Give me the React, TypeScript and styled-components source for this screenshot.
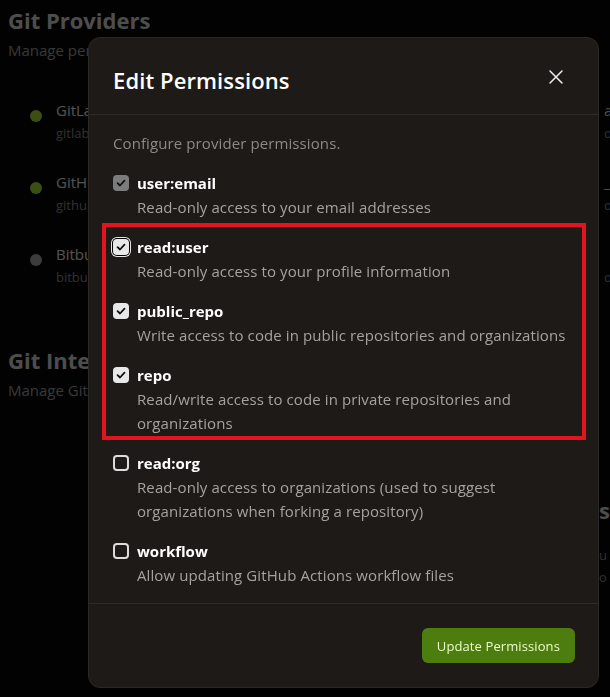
import React from "react";
import styled, { createGlobalStyle } from "styled-components";

const Global = createGlobalStyle`
  html, body { margin: 0; padding: 0; background: #080808; overflow: hidden; }
  body { font-family: "Open Sans", "Noto Sans", sans-serif; width: 610px; height: 697px; }
  * { box-sizing: border-box; }
`;

const Page = styled.div`
  position: relative;
  width: 610px;
  height: 697px;
  padding: 6px 8px;
  color: #e5e5e5;
  overflow: hidden;
`;

const Section = styled.section<{ $gap?: number }>`
  display: flex;
  flex-direction: column;
  margin-bottom: ${(p) => p.$gap ?? 0}px;
`;

const H2 = styled.h2`
  margin: 0;
  font-size: 22px;
  font-weight: 700;
  line-height: 28px;
  color: #dcdcdc;
  white-space: nowrap;
`;

const Sub = styled.p`
  margin: 4px 0 0;
  font-size: 15px;
  line-height: 24px;
  color: #a0a0a0;
  white-space: nowrap;
`;

const ProviderList = styled.div`
  display: flex;
  flex-direction: column;
  gap: 26px;
  padding: 36px 0 0 22px;
`;

const ProviderRow = styled.div`
  display: flex;
  align-items: flex-start;
  width: 640px;
`;

const Dot = styled.span<{ $on: boolean }>`
  width: 12px;
  height: 12px;
  border-radius: 50%;
  margin: 12px 14px 0 0;
  background: ${(p) => (p.$on ? "#a3e635" : "#ababab")};
  flex: none;
`;

const ProviderText = styled.div`
  display: flex;
  flex-direction: column;
  flex: 1;
`;

const ProviderName = styled.span`
  font-size: 15px;
  line-height: 24px;
  color: #e8e8e8;
`;

const ProviderUrl = styled.span`
  font-size: 13px;
  line-height: 22px;
  color: #8a8a8a;
`;

const ProviderSide = styled.div`
  display: flex;
  flex-direction: column;
  width: 66px;
  font-size: 15px;
  line-height: 24px;
  color: #d8d8d8;
  white-space: nowrap;
`;

const SideSmall = styled.span`
  font-size: 13px;
  line-height: 22px;
  color: #8a8a8a;
`;

const RightSection = styled.div`
  display: flex;
  flex-direction: column;
  padding-left: 591px;
  margin-top: 94px;
`;

const RightHead = styled.span`
  font-size: 22px;
  font-weight: 700;
  line-height: 28px;
  color: #dcdcdc;
  margin-bottom: 20px;
`;

const Overlay = styled.div`
  position: fixed;
  inset: 0;
  background: rgba(0, 0, 0, 0.65);
`;

const Dialog = styled.div`
  position: fixed;
  left: 88px;
  top: 37px;
  width: 511px;
  height: 651px;
  display: flex;
  flex-direction: column;
  background: #1e1a17;
  border: 1px solid #2b2724;
  border-radius: 12px;
  color: #f5f5f5;
`;

const Header = styled.header`
  display: flex;
  align-items: center;
  justify-content: space-between;
  padding: 24px 24px 16px 24px;
  height: 77px;
  border-bottom: 1px solid #302b28;
`;

const Title = styled.h2`
  margin: 0;
  font-size: 22px;
  font-weight: 600;
  line-height: 32px;
  letter-spacing: 0.1px;
  color: #ffffff;
`;

const Close = styled.button`
  display: flex;
  align-items: center;
  justify-content: center;
  width: 24px;
  height: 24px;
  padding: 0;
  margin: -6px 6px 0 0;
  border: none;
  background: transparent;
  color: #f0f0f0;
  cursor: pointer;
`;

const Body = styled.div`
  display: flex;
  flex-direction: column;
  gap: 16px;
  padding: 16px 24px 16px 24px;
  flex: 1;
  border-bottom: 1px solid #302b28;
`;

const Intro = styled.p`
  margin: 0;
  font-size: 15px;
  line-height: 24px;
  letter-spacing: 0.1px;
  color: #8c8a88;
`;

const Group = styled.div<{ $highlight?: boolean }>`
  display: flex;
  flex-direction: column;
  gap: 16px;
  ${(p) =>
    p.$highlight
      ? `
    margin: -12px -12px -5px -11px;
    padding: 8px 8px 1px 7px;
    border: 4px solid #e3141f;
  `
      : ""}
`;

const Item = styled.div`
  display: grid;
  grid-template-columns: 16px 1fr;
  column-gap: 8px;
`;

const Box = styled.span<{ $state: "checked" | "disabled" | "empty"; $focus?: boolean }>`
  width: 16px;
  height: 16px;
  margin-top: 4px;
  border-radius: 4px;
  display: flex;
  align-items: center;
  justify-content: center;
  color: #111;
  background: ${(p) =>
    p.$state === "checked" ? "#e8e8e8" : p.$state === "disabled" ? "#7c7c7c" : "transparent"};
  border: ${(p) => (p.$state === "empty" ? "2px solid #dcdcdc" : "none")};
  box-shadow: ${(p) => (p.$focus ? "0 0 0 1px #000, 0 0 0 2px #e8e8e8" : "none")};
`;

const Label = styled.span`
  font-size: 15px;
  font-weight: 700;
  line-height: 24px;
  color: #ffffff;
`;

const Desc = styled.span`
  grid-column: 2;
  font-size: 15px;
  line-height: 24px;
  letter-spacing: 0.1px;
  color: #a5a29f;
`;

const Footer = styled.footer`
  display: flex;
  justify-content: flex-end;
  padding: 24px 23px 24px 24px;
`;

const Primary = styled.button`
  height: 35px;
  padding: 0 15px;
  border: none;
  border-radius: 6px;
  background: #4d7c0f;
  color: #ecfccb;
  font-family: inherit;
  font-size: 13px;
  letter-spacing: 0.1px;
  cursor: pointer;
`;

const Check = () => (
  <svg width="10" height="10" viewBox="0 0 10 10" fill="none">
    <path d="M1.6 5.2 L4 7.5 L8.5 2.6" stroke="#111" strokeWidth="1.8" strokeLinecap="round" strokeLinejoin="round" />
  </svg>
);

type Perm = { name: string; desc: string; state: "checked" | "disabled" | "empty"; focus?: boolean };

const PermItem = ({ p }: { p: Perm }) => (
  <Item>
    <Box $state={p.state} $focus={p.focus}>{p.state !== "empty" && <Check />}</Box>
    <Label>{p.name}</Label>
    <Desc>{p.desc}</Desc>
  </Item>
);

const first: Perm = { name: "user:email", desc: "Read-only access to your email addresses", state: "disabled" };
const highlighted: Perm[] = [
  { name: "read:user", desc: "Read-only access to your profile information", state: "checked", focus: true },
  { name: "public_repo", desc: "Write access to code in public repositories and organizations", state: "checked" },
  { name: "repo", desc: "Read/write access to code in private repositories and organizations", state: "checked" },
];
const rest: Perm[] = [
  { name: "read:org", desc: "Read-only access to organizations (used to suggest organizations when forking a repository)", state: "empty" },
  { name: "workflow", desc: "Allow updating GitHub Actions workflow files", state: "empty" },
];

const providers = [
  { name: "GitLab", url: "gitlab.com", on: true, side: "access", sub: "open" },
  { name: "GitHub", url: "github.com", on: true, side: "_repo", sub: "open" },
  { name: "Bitbucket", url: "bitbucket.org", on: false, side: "", sub: "open" },
];

export default function App() {
  return (
    <>
      <Global />
      <Page>
        <Section $gap={58}>
          <H2>Git Providers</H2>
          <Sub>Manage permissions for connected providers</Sub>
          <ProviderList>
            {providers.map((pr) => (
              <ProviderRow key={pr.name}>
                <Dot $on={pr.on} />
                <ProviderText>
                  <ProviderName>{pr.name}</ProviderName>
                  <ProviderUrl>{pr.url}</ProviderUrl>
                </ProviderText>
                <ProviderSide>
                  <span>{pr.side || "\u00a0"}</span>
                  <SideSmall>{pr.sub}</SideSmall>
                </ProviderSide>
              </ProviderRow>
            ))}
          </ProviderList>
        </Section>
        <Section>
          <H2>Git Integrations</H2>
          <Sub>Manage Git integrations</Sub>
          <RightSection>
            <RightHead>s</RightHead>
            <SideSmall>u</SideSmall>
            <SideSmall>o</SideSmall>
          </RightSection>
        </Section>
        <Overlay />
        <Dialog role="dialog">
          <Header>
            <Title>Edit Permissions</Title>
            <Close aria-label="Close">
              <svg width="16" height="16" viewBox="0 0 16 16" fill="none">
                <path d="M2 2 L14 14 M14 2 L2 14" stroke="currentColor" strokeWidth="1.5" strokeLinecap="round" />
              </svg>
            </Close>
          </Header>
          <Body>
            <Intro>Configure provider permissions.</Intro>
            <PermItem p={first} />
            <Group $highlight>
              {highlighted.map((p) => (
                <PermItem key={p.name} p={p} />
              ))}
            </Group>
            {rest.map((p) => (
              <PermItem key={p.name} p={p} />
            ))}
          </Body>
          <Footer>
            <Primary>Update Permissions</Primary>
          </Footer>
        </Dialog>
      </Page>
    </>
  );
}
